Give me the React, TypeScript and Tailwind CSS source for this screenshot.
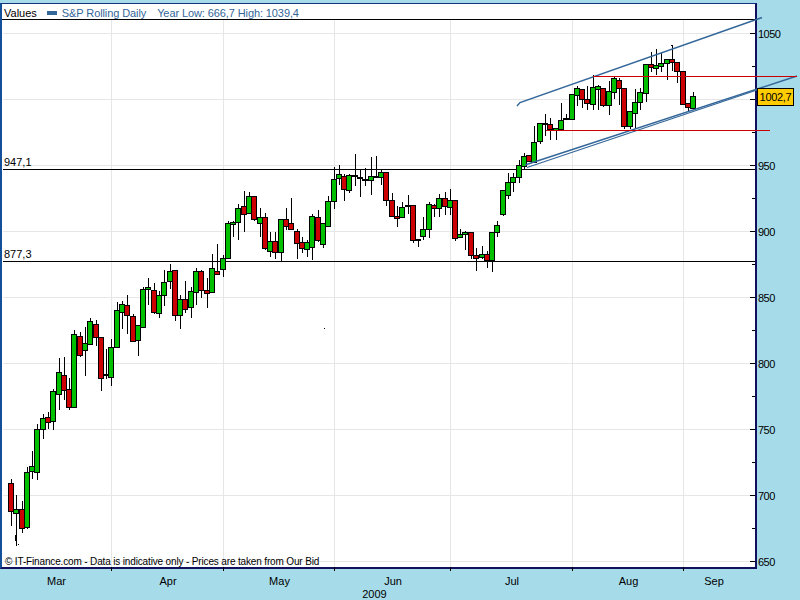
// S&P rolling daily candlestick chart
type Candle = [number, number, number, number, number, 'g' | 'r' | 'd'];

// x, wick top, wick bottom, body top, body bottom, colour (page pixels)
const candles: Candle[] = [
  [11, 479, 526, 483, 511, 'r'], [16, 495, 546, 509, 513, 'g'], [22, 501, 533, 509, 528, 'r'],
  [27, 467, 529, 472, 527, 'g'], [32, 451, 479, 466, 471, 'g'], [37, 424, 480, 429, 472, 'g'],
  [43, 414, 439, 418, 429, 'g'], [48, 412, 429, 417, 422, 'r'], [53, 389, 430, 391, 421, 'g'],
  [59, 358, 410, 372, 394, 'g'], [64, 357, 400, 375, 390, 'r'], [69, 378, 410, 389, 407, 'r'],
  [74, 330, 407, 334, 407, 'g'], [80, 332, 357, 336, 355, 'r'], [85, 327, 376, 343, 350, 'g'],
  [90, 318, 345, 321, 344, 'g'], [96, 320, 346, 324, 337, 'r'], [101, 337, 391, 337, 378, 'r'],
  [106, 349, 379, 374, 375, 'd'], [111, 339, 386, 347, 377, 'g'], [117, 302, 348, 310, 347, 'g'],
  [122, 301, 329, 304, 312, 'g'], [127, 295, 334, 305, 315, 'r'], [133, 314, 342, 316, 341, 'r'],
  [138, 325, 356, 325, 340, 'g'], [143, 287, 328, 289, 327, 'g'], [148, 278, 305, 287, 289, 'g'],
  [154, 283, 314, 290, 312, 'r'], [159, 291, 318, 295, 313, 'g'], [164, 270, 306, 282, 295, 'g'],
  [170, 264, 289, 271, 281, 'g'], [175, 270, 321, 270, 315, 'r'], [180, 295, 329, 299, 315, 'g'],
  [185, 281, 313, 299, 309, 'r'], [191, 287, 318, 291, 307, 'g'], [196, 268, 305, 271, 292, 'g'],
  [201, 270, 298, 271, 290, 'r'], [207, 278, 308, 290, 293, 'r'], [212, 254, 292, 268, 292, 'g'],
  [217, 244, 274, 271, 274, 'r'], [223, 255, 277, 258, 269, 'g'], [228, 221, 258, 223, 258, 'g'],
  [233, 221, 237, 222, 223, 'g'], [238, 204, 240, 208, 222, 'g'], [244, 191, 232, 206, 214, 'r'],
  [249, 192, 214, 196, 213, 'g'], [254, 196, 221, 196, 219, 'r'], [260, 208, 237, 217, 223, 'g'],
  [265, 213, 250, 217, 248, 'r'], [270, 232, 257, 241, 251, 'g'], [275, 232, 259, 241, 252, 'r'],
  [281, 219, 261, 219, 252, 'g'], [286, 208, 230, 219, 226, 'r'], [291, 198, 229, 223, 229, 'r'],
  [297, 229, 259, 231, 243, 'r'], [302, 237, 253, 242, 248, 'r'], [307, 240, 257, 242, 249, 'g'],
  [312, 214, 260, 216, 247, 'g'], [318, 210, 242, 217, 240, 'r'], [323, 223, 248, 223, 244, 'g'],
  [328, 196, 226, 201, 226, 'g'], [334, 167, 209, 179, 201, 'g'], [339, 165, 185, 174, 178, 'g'],
  [344, 174, 201, 176, 189, 'r'], [349, 174, 193, 175, 190, 'g'], [355, 154, 186, 175, 176, 'd'],
  [360, 169, 197, 177, 178, 'd'], [365, 168, 186, 179, 180, 'd'], [371, 157, 195, 176, 180, 'g'],
  [376, 156, 176, 176, 177, 'd'], [381, 169, 185, 172, 177, 'g'], [386, 172, 206, 172, 200, 'r'],
  [392, 193, 217, 200, 216, 'r'], [397, 206, 227, 216, 218, 'r'], [402, 202, 218, 207, 217, 'g'],
  [408, 195, 214, 205, 206, 'd'], [413, 205, 243, 205, 240, 'r'], [418, 239, 247, 239, 240, 'd'],
  [423, 217, 240, 229, 236, 'g'], [429, 202, 238, 204, 229, 'g'], [434, 204, 217, 205, 208, 'r'],
  [439, 194, 217, 198, 208, 'g'], [445, 192, 215, 198, 206, 'r'], [450, 189, 215, 200, 207, 'g'],
  [455, 200, 241, 200, 238, 'r'], [460, 229, 237, 234, 237, 'g'], [465, 231, 250, 232, 234, 'g'],
  [471, 232, 259, 232, 255, 'r'], [476, 248, 271, 255, 258, 'r'], [482, 246, 259, 254, 257, 'g'],
  [487, 251, 268, 254, 260, 'r'], [492, 232, 272, 232, 260, 'g'], [497, 221, 237, 225, 232, 'g'],
  [503, 190, 216, 190, 214, 'g'], [508, 173, 199, 182, 195, 'g'], [513, 173, 192, 177, 182, 'g'],
  [519, 160, 183, 165, 177, 'g'], [524, 153, 169, 156, 166, 'g'], [529, 155, 162, 155, 161, 'r'],
  [534, 126, 162, 142, 162, 'g'], [540, 123, 144, 123, 141, 'g'], [545, 114, 136, 123, 124, 'd'],
  [550, 118, 140, 124, 129, 'r'], [556, 128, 140, 128, 130, 'g'], [561, 103, 129, 120, 129, 'g'],
  [566, 114, 119, 118, 119, 'd'], [572, 94, 119, 94, 119, 'g'], [577, 86, 106, 88, 95, 'g'],
  [582, 89, 108, 89, 99, 'r'], [587, 86, 110, 99, 103, 'r'], [593, 75, 110, 87, 104, 'g'],
  [598, 85, 110, 86, 89, 'g'], [603, 88, 107, 88, 105, 'r'], [609, 81, 115, 91, 105, 'g'],
  [614, 77, 99, 78, 92, 'g'], [619, 78, 105, 80, 88, 'r'], [624, 88, 129, 88, 126, 'r'],
  [630, 111, 129, 111, 126, 'g'], [635, 89, 129, 102, 113, 'g'], [640, 88, 110, 92, 102, 'g'],
  [646, 64, 102, 64, 93, 'g'], [651, 52, 72, 64, 67, 'r'], [656, 49, 75, 65, 68, 'g'],
  [661, 53, 72, 63, 66, 'g'], [667, 59, 80, 59, 63, 'g'], [672, 45, 71, 59, 62, 'r'],
  [677, 62, 83, 62, 71, 'r'], [683, 71, 104, 71, 104, 'r'], [688, 103, 112, 103, 107, 'r'],
  [693, 92, 109, 96, 108, 'g'],
];

const gridX = [111, 223, 334, 450, 572, 683];
const gridY = [33, 99, 165, 231, 297, 363, 429, 495, 561];
const minorY = [66, 132, 198, 264, 330, 396, 462, 528];
const prices = ['1050', '', '950', '900', '850', '800', '750', '700', '650'];
const months = ['Mar', 'Apr', 'May', 'Jun', 'Jul', 'Aug', 'Sep'];

function Chart() {
  return (
    <svg className="absolute left-0 top-0 w-[800px] h-[600px] overflow-visible" viewBox="0 0 800 600">
      <g shapeRendering="crispEdges">
        {gridX.map((x) => (
          <line key={x} x1={x + 0.5} x2={x + 0.5} y1={20} y2={567} stroke="#e6e6e6" />
        ))}
        {gridY.map((y) => (
          <line key={y} x1={3} x2={755} y1={y + 0.5} y2={y + 0.5} stroke="#e6e6e6" />
        ))}
        <line x1={3} x2={755} y1={169.5} y2={169.5} stroke="#000" />
        <line x1={3} x2={755} y1={261.5} y2={261.5} stroke="#000" />
        {gridY.map((y) => (
          <line key={y} x1={750} x2={755} y1={y + 0.5} y2={y + 0.5} stroke="#000" />
        ))}
        {minorY.map((y) => (
          <line key={y} x1={752} x2={755} y1={y + 0.5} y2={y + 0.5} stroke="#000" />
        ))}
        {gridX.map((x) => (
          <line key={x} x1={x + 0.5} x2={x + 0.5} y1={567} y2={571} stroke="#000" />
        ))}
        {candles.map(([x, hi, lo, top, bot, c]) => (
          <g key={x}>
            <rect x={x} y={hi} width={1} height={lo - hi} fill="#000" />
            {c === 'd' ? (
              <rect x={x - 3} y={top} width={6} height={2} fill="#000" />
            ) : (
              <rect
                x={x - 2.5}
                y={top + 0.5}
                width={5}
                height={Math.max(bot - top, 2)}
                fill={c === 'g' ? '#00c000' : '#cc0000'}
                stroke="#000"
              />
            )}
          </g>
        ))}
        <rect x={15} y={535} width={2} height={6} fill="#000" />
        <rect x={18} y={544} width={1} height={1} fill="#000" />
        <rect x={324} y={328} width={1} height={1} fill="#000" />
        <rect x={671} y={45} width={2} height={1} fill="#000" />
      </g>
      {/* channel and support lines */}
      <g fill="none" stroke="#336699">
        <path strokeWidth={1.4} d="M517 106 L520 102.5 L762 17.5" />
        <path strokeWidth={1.5} d="M525 165 L797 76" />
        <path strokeWidth={1.2} d="M527 167.5 L757 90" />
      </g>
      <g shapeRendering="crispEdges" stroke="#cc0000">
        <line x1={593} x2={797} y1={76.5} y2={76.5} />
        <line x1={546} x2={770} y1={130.5} y2={130.5} />
      </g>
    </svg>
  );
}

export default function App() {
  return (
    <div className="relative w-[800px] h-[600px] overflow-hidden bg-[#a6dcea] pt-[3px] font-['Liberation_Sans',sans-serif] text-[11px] text-black">
      <div className="flex h-[566px]">
        <div className="relative w-[757px] shrink-0 flex flex-col bg-white border-t border-t-[#14327a] border-l-2 border-l-[#14509a] border-r-2 border-r-[#10105e] border-b-2 border-b-[#10105e]">
          <div className="h-[16px] flex items-center border-b border-black pl-[2px] pt-[3px] leading-none">
            <span>Values</span>
            <span className="ml-[10px] w-[10px] h-[4px] bg-[#336699]" />
            <span className="ml-[5px] text-[#336699] tracking-[-0.1px]">S&amp;P Rolling Daily</span>
            <span className="ml-[11px] text-[#336699] tracking-[-0.1px]">Year Low: 666,7 High: 1039,4</span>
          </div>
        </div>
        <div className="flex flex-col -mt-[3px] pl-[1px] tracking-[-0.5px]">
          {prices.map((p, i) => (
            <div key={i} className="h-[66px] shrink-0 flex items-center leading-none pt-[2px]">
              {p}
            </div>
          ))}
        </div>
      </div>
      <div className="grid grid-cols-[111px_112px_111px_116px_122px_111px_60px] pl-[1px] pt-[7px] leading-none">
        {months.map((m) => (
          <div key={m} className="text-center">
            {m}
          </div>
        ))}
      </div>
      <div className="text-center w-[749px] pt-[2px] leading-none">2009</div>

      <Chart />

      <span className="absolute z-10 left-[4px] top-[157px] leading-none">947,1</span>
      <span className="absolute z-10 left-[4px] top-[249px] leading-none">877,3</span>
      <span className="absolute z-10 left-[5px] top-[557px] leading-none text-[10px] tracking-[-0.15px]">
        © IT-Finance.com - Data is indicative only - Prices are taken from Our Bid
      </span>
      <div className="absolute z-10 left-[757px] top-[88px] w-[37px] h-[18px] bg-[#ffcc00] border border-black flex items-center justify-center leading-none tracking-[-0.3px]">
        1002,7
      </div>
    </div>
  );
}
